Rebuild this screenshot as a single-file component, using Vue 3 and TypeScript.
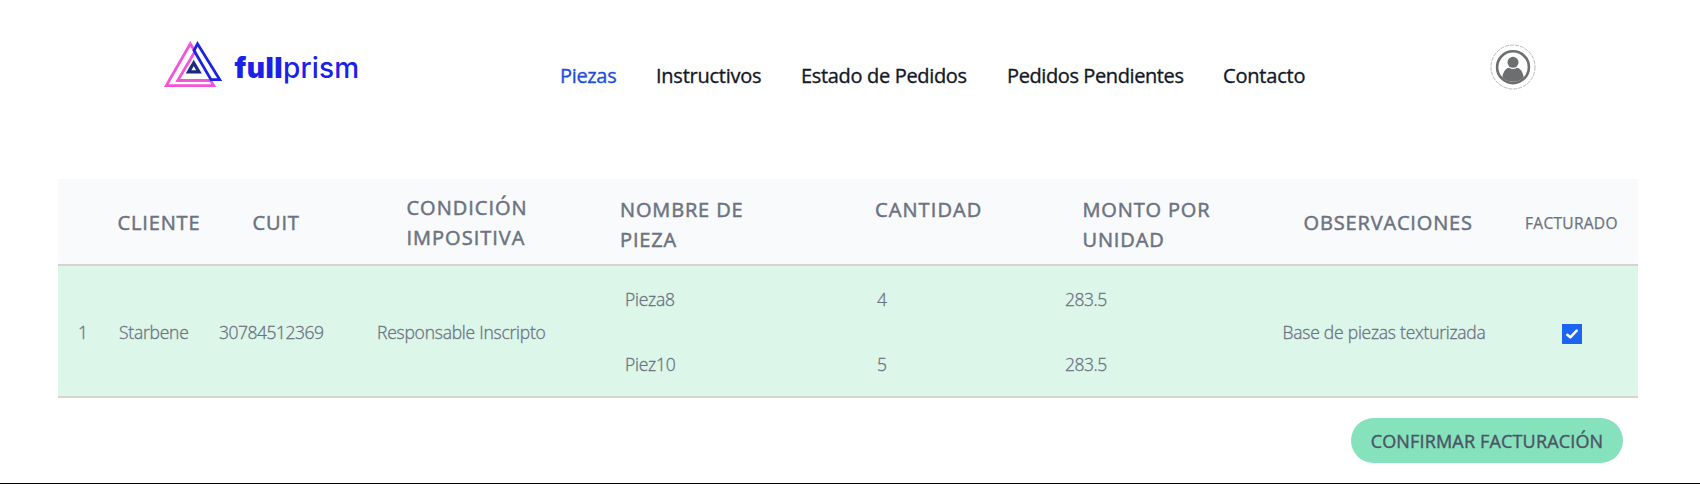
<script setup lang="ts">
interface NavLink {
  label: string
  key: string
  active?: boolean
}

interface Piece {
  name: string
  quantity: number
  unitPrice: number
}

interface Order {
  id: number
  client: string
  cuit: string
  taxStatus: string
  pieces: Piece[]
  notes: string
}

const links: NavLink[] = [
  { label: 'Piezas', key: 'pieces', active: true },
  { label: 'Instructivos', key: 'guides' },
  { label: 'Estado de Pedidos', key: 'status' },
  { label: 'Pedidos Pendientes', key: 'pending' },
  { label: 'Contacto', key: 'contact' },
]

const orders: Order[] = [
  {
    id: 1,
    client: 'Starbene',
    cuit: '30784512369',
    taxStatus: 'Responsable Inscripto',
    pieces: [
      { name: 'Pieza8', quantity: 4, unitPrice: 283.5 },
      { name: 'Piez10', quantity: 5, unitPrice: 283.5 },
    ],
    notes: 'Base de piezas texturizada',
  },
]
</script>

<template>
  <div class="page">
    <header class="topbar">
      <svg class="logo" width="200" height="54" viewBox="0 0 200 54">
        <g fill="none" stroke-width="2.8">
          <path d="M26.300 3.800L31 11.500L13.700 40.500H46.500L49.700 45.600H2.300Z" stroke="#f553dc" />
          <path d="M33.500 3.800L30 10.500L47 39.600H55.700Z" stroke="#1b22e8" />
          <path d="M29.700 23L24.500 31.900H35Z" stroke="#1b2a80" stroke-width="3.200" />
        </g>
        <text class="word heavy" x="70.500" y="37.800" textLength="48">full</text>
        <text class="word" x="119" y="37.800" textLength="76">prism</text>
      </svg>
      <nav class="nav">
        <a v-for="l in links" :key="l.key" :class="['link', l.key, { active: l.active }]">{{ l.label }}</a>
      </nav>
      <svg class="avatar" width="46" height="46" viewBox="0 0 46 46">
        <circle cx="23" cy="23" r="22" fill="#fff" stroke="#a8a8a8" stroke-width="0.800" stroke-dasharray="4 1" />
        <circle cx="23" cy="23.200" r="15.900" fill="none" stroke="#6d6e70" stroke-width="2.600" />
        <circle cx="23" cy="18.300" r="5.500" fill="#6d6e70" />
        <path d="M12.300 33.500C13 28 15.500 24.300 19 23.700C21.500 25.500 24.500 25.500 27 23.700C30.500 24.300 33 28 33.700 33.500A15.500 15.500 0 0 1 12.300 33.500Z" fill="#6d6e70" />
      </svg>
    </header>

    <section class="table">
      <div class="head">
        <span></span>
        <span class="th client">Cliente</span>
        <span class="th cuit">Cuit</span>
        <span class="th tax">Condición<br />impositiva</span>
        <span class="th piece">Nombre de<br />pieza</span>
        <span class="th qty">Cantidad</span>
        <span class="th price">Monto por<br />unidad</span>
        <span class="th notes">Observaciones</span>
        <span class="th billed">Facturado</span>
      </div>
      <div v-for="o in orders" :key="o.id" class="row">
        <span class="td mid">{{ o.id }}</span>
        <span class="td mid">{{ o.client }}</span>
        <span class="td mid digits">{{ o.cuit }}</span>
        <span class="td mid">{{ o.taxStatus }}</span>
        <div class="pieces">
          <div v-for="p in o.pieces" :key="p.name" class="line">
            <span class="td">{{ p.name }}</span>
            <span class="td">{{ p.quantity }}</span>
            <span class="td digits">{{ p.unitPrice }}</span>
          </div>
        </div>
        <span class="td mid">{{ o.notes }}</span>
        <span class="check">
          <svg width="20" height="20" viewBox="0 0 20 20">
            <path d="M5.300 10.700L8.300 13.300L14.700 6.700" fill="none" stroke="#fff" stroke-width="2.500" stroke-linecap="round" stroke-linejoin="round" />
          </svg>
        </span>
      </div>
    </section>

    <div class="actions">
      <button class="confirm">CONFIRMAR FACTURACIÓN</button>
    </div>
    <div class="rule"></div>
  </div>
</template>

<style>
body {
  margin: 0;
  background: #fff;
}
</style>

<style scoped>
.page {
  width: 1700px;
  height: 492px;
  overflow: hidden;
  box-sizing: border-box;
  background: #fff;
  font-family: "Open Sans", "Noto Sans", sans-serif;
}
.topbar {
  display: flex;
  height: 179px;
  align-items: flex-start;
  padding-left: 164px;
  box-sizing: border-box;
}
.logo {
  margin-top: 40px;
  flex: none;
}
.word {
  font-family: Inter, sans-serif;
  font-size: 28px;
  font-weight: 500;
  fill: #1b22e8;
}
.word.heavy {
  font-weight: 900;
}
.nav {
  display: flex;
  margin: 61px 0 0 196px;
  width: 930px;
}
.link {
  font-size: 20px;
  line-height: 30px;
  font-weight: 400;
  letter-spacing: -0.330px;
  -webkit-text-stroke: 0.350px currentColor;
  color: #111827;
  white-space: nowrap;
  flex: none;
}
.link.active {
  color: #1d4ed8;
}
.link.pieces {
  width: 96px;
}
.link.guides {
  width: 145px;
  letter-spacing: -0.250px;
}
.link.status {
  width: 206px;
}
.link.pending {
  width: 216px;
  letter-spacing: -0.400px;
}
.link.contact {
  letter-spacing: -0.200px;
}
.avatar {
  margin-top: 44px;
  flex: none;
}
.table {
  width: 1580px;
  margin-left: 58px;
}
.head,
.row {
  display: grid;
  border-bottom: 2px solid #d6d3d1;
  white-space: nowrap;
}
.head {
  height: 85px;
  grid-template-columns: 59.5px 135px 154px 213.5px 255px 207.5px 221px 221.5px 1fr;
  align-items: center;
  background: #f9fafb;
}
.row {
  height: 130px;
  grid-template-columns: 41px 100px 158px 248px 657.5px 279.5px 1fr;
  align-items: center;
  padding-left: 20px;
  background: #dcf6ea;
}
.th {
  font-size: 20px;
  line-height: 30px;
  font-weight: 400;
  letter-spacing: 0.850px;
  -webkit-text-stroke: 0.500px currentColor;
  text-transform: uppercase;
  color: #6b7280;
  padding-top: 3px;
}
.th.tax {
  padding-top: 2px;
  letter-spacing: 1px;
}
.th.piece,
.th.qty,
.th.price {
  align-self: start;
  padding-top: 16px;
}
.th.qty {
  letter-spacing: 1.100px;
}
.th.billed {
  font-size: 15.500px;
  letter-spacing: 0.300px;
  -webkit-text-stroke-width: 0.250px;
  padding-top: 2px;
}
.td {
  font-size: 17.500px;
  line-height: 28px;
  font-weight: 300;
  letter-spacing: -0.240px;
  -webkit-text-stroke: 0.300px currentColor;
  color: #6b7280;
}
.td.digits {
  letter-spacing: -0.500px;
}
.td.mid {
  padding-top: 2px;
}
.line {
  display: grid;
  grid-template-columns: 252px 188px 1fr;
  height: 65px;
  align-items: center;
}
.check {
  width: 20px;
  height: 20px;
  margin-top: 6px;
  background: #1c64f2;
}
.check svg {
  display: block;
}
.actions {
  display: flex;
  justify-content: flex-end;
  padding: 20px 77px 0 0;
}
.confirm {
  width: 272px;
  height: 45px;
  border: 0;
  border-radius: 23px;
  padding: 0;
  background: #86e2bd;
  color: #4b5563;
  font-family: inherit;
  font-size: 18px;
  font-weight: 400;
  letter-spacing: 0.170px;
  -webkit-text-stroke: 0.400px currentColor;
  white-space: nowrap;
}
.rule {
  margin-top: 20px;
  height: 1px;
  background: #000;
}
</style>
